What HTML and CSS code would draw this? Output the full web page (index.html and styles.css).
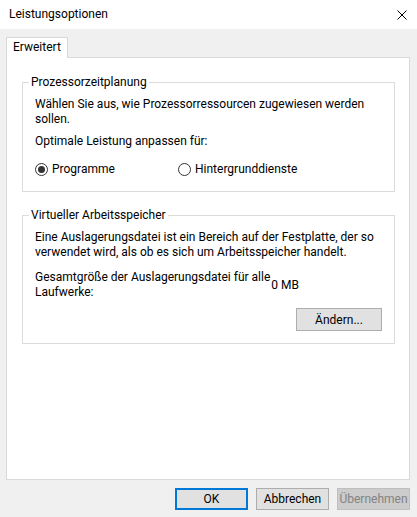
FILE: index.html
```html
<!DOCTYPE html>
<html lang="de">
<head>
    <meta charset="UTF-8">
    <title>Leistungsoptionen</title>
    <link rel="stylesheet" href="styles.css">
</head>
<body>
    <div class="window">
        <div class="titlebar">
            <span class="title">Leistungsoptionen</span>
            <svg class="close" width="10" height="10" viewBox="0 0 10 10">
                <path d="M0.5 0.5 L9.5 9.5 M9.5 0.5 L0.5 9.5" stroke="#000" stroke-width="1" fill="none"/>
            </svg>
        </div>

        <div class="body">
            <div class="tabs">
                <div class="tab">Erweitert</div>
            </div>

            <div class="panel">
                <fieldset class="group">
                    <legend>Prozessorzeitplanung</legend>
                    <p class="text">Wählen Sie aus, wie Prozessorressourcen zugewiesen werden sollen.</p>
                    <p class="text">Optimale Leistung anpassen für:</p>
                    <div class="radios">
                        <label class="radio"><input type="radio" name="opt" checked> Programme</label>
                        <label class="radio"><input type="radio" name="opt"> Hintergrunddienste</label>
                    </div>
                </fieldset>

                <fieldset class="group">
                    <legend>Virtueller Arbeitsspeicher</legend>
                    <p class="text">Eine Auslagerungsdatei ist ein Bereich auf der Festplatte, der so verwendet wird, als ob es sich um Arbeitsspeicher handelt.</p>
                    <div class="size-row">
                        <span class="size-label">Gesamtgröße der Auslagerungsdatei für alle<br>Laufwerke:</span>
                        <span class="size-value">0 MB</span>
                    </div>
                    <div class="change-row">
                        <button class="btn">Ändern...</button>
                    </div>
                </fieldset>
            </div>

            <div class="actions">
                <button class="btn default">OK</button>
                <button class="btn">Abbrechen</button>
                <button class="btn" disabled>Übernehmen</button>
            </div>
        </div>
    </div>
</body>
</html>
```

FILE: styles.css
```css
body {
    margin: 0;
    padding: 0;
    font-family: Roboto, "Noto Sans", sans-serif;
    font-size: 12px;
    line-height: 15px;
    color: #000;
    background-color: #f0f0f0;
}

.window {
    width: 417px;
    height: 517px;
}

.titlebar {
    height: 29px;
    background-color: #fff;
    display: flex;
    align-items: center;
    justify-content: space-between;
    padding: 0 10px 0 9px;
    box-sizing: border-box;
}

.body {
    padding: 8px 7px 0 6px;
}

.tabs {
    display: flex;
}

.tab {
    height: 21px;
    box-sizing: border-box;
    padding: 2px 6px 0 6px;
    background-color: #fff;
    border: 1px solid #d9d9d9;
    border-bottom: none;
    margin-bottom: -1px;
    position: relative;
    z-index: 1;
}

.panel {
    height: 423px;
    box-sizing: border-box;
    background-color: #fff;
    border: 1px solid #d9d9d9;
    padding: 17px 14px 0 15px;
}

.group {
    margin: 0 0 16px 0;
    padding: 7px 12px 14px 12px;
    border: 1px solid #dcdcdc;
}

.group + .group {
    padding-bottom: 12px;
}

.group legend {
    padding: 0 2px;
    margin-left: -6px;
}

.text {
    margin: 0 0 7px 0;
}

.radios {
    display: flex;
    margin-top: 13px;
}

.radio {
    display: flex;
    align-items: center;
    gap: 4px;
}

.radio:first-child {
    width: 143px;
}

.radio input {
    appearance: none;
    margin: 0;
    width: 13px;
    height: 13px;
    border: 1px solid #333;
    border-radius: 50%;
    background-color: #fff;
    display: flex;
    align-items: center;
    justify-content: center;
}

.radio input:checked::after {
    content: "";
    width: 7px;
    height: 7px;
    border-radius: 50%;
    background-color: #333;
}

.size-row {
    display: flex;
    align-items: center;
    gap: 1px;
    margin-top: 10px;
}

.size-label {
    white-space: nowrap;
}

.change-row {
    display: flex;
    justify-content: flex-end;
    margin-top: 8px;
}

.btn {
    font-family: inherit;
    font-size: 12px;
    color: #000;
    background-color: #e1e1e1;
    border: 1px solid #adadad;
    padding: 0;
    margin: 0;
    height: 23px;
    width: 86px;
}

.actions {
    display: flex;
    justify-content: flex-end;
    gap: 8px;
    margin-top: 8px;
}

.actions .btn {
    width: 73px;
    height: 22px;
}

.btn.default {
    border: 2px solid #0078d7;
}

.btn:disabled {
    background-color: #cccccc;
    border-color: #bfbfbf;
    color: #838383;
}
```
